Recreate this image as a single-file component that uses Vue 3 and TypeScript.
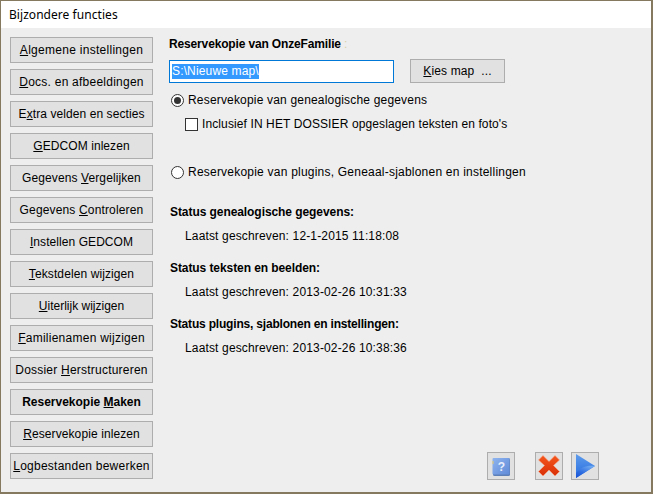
<script setup lang="ts">
interface NavItem { pre: string; key: string; post: string; ls: number; active?: boolean }
const items: NavItem[] = [
  { pre: '', key: 'A', post: 'lgemene instellingen', ls: 0.28 },
  { pre: '', key: 'D', post: 'ocs. en afbeeldingen', ls: 0.24 },
  { pre: 'E', key: 'x', post: 'tra velden en secties', ls: 0.08 },
  { pre: '', key: 'G', post: 'EDCOM inlezen', ls: 0.07 },
  { pre: 'Gegevens ', key: 'V', post: 'ergelijken', ls: 0.1 },
  { pre: 'Gegevens ', key: 'C', post: 'ontroleren', ls: 0.15 },
  { pre: '', key: 'I', post: 'nstellen GEDCOM', ls: 0.07 },
  { pre: '', key: 'T', post: 'ekstdelen wijzigen', ls: 0.1 },
  { pre: '', key: 'U', post: 'iterlijk wijzigen', ls: 0 },
  { pre: '', key: 'F', post: 'amilienamen wijzigen', ls: 0.25 },
  { pre: 'Dossier ', key: 'H', post: 'erstructureren', ls: 0.22 },
  { pre: 'Reservekopie ', key: 'M', post: 'aken', ls: 0, active: true },
  { pre: '', key: 'R', post: 'eservekopie inlezen', ls: 0.1 },
  { pre: '', key: 'L', post: 'ogbestanden bewerken', ls: 0.24 },
]
const statuses = [
  { title: 'Status genealogische gegevens:', ls: -0.07, value: 'Laatst geschreven: 12-1-2015 11:18:08' },
  { title: 'Status teksten en beelden:', ls: -0.08, value: 'Laatst geschreven: 2013-02-26 10:31:33' },
  { title: 'Status plugins, sjablonen en instellingen:', ls: -0.19, value: 'Laatst geschreven: 2013-02-26 10:38:36' },
]
const kiesRest = 'ies map  ...'
</script>

<template>
  <div class="window">
    <div class="titlebar">Bijzondere functies</div>
    <div class="content">
      <nav class="nav">
        <button v-for="it in items" :key="it.key + it.post" class="btn navbtn" :class="{ active: it.active }" :style="{ letterSpacing: it.ls + 'px' }">{{ it.pre }}<u>{{ it.key }}</u>{{ it.post }}</button>
      </nav>
      <main class="main">
        <div class="heading">Reservekopie van OnzeFamilie<span class="faint"> :</span></div>
        <div class="pathrow">
          <div class="input"><span class="sel">S:\Nieuwe map\</span></div>
          <button class="btn kies"><u>K</u>{{ kiesRest }}</button>
        </div>
        <div class="option first"><span class="radio on"></span>Reservekopie van genealogische gegevens</div>
        <div class="check"><span class="box"></span>Inclusief IN HET DOSSIER opgeslagen teksten en foto's</div>
        <div class="option second"><span class="radio"></span>Reservekopie van plugins, Geneaal-sjablonen en instellingen</div>
        <section v-for="s in statuses" :key="s.title" class="status">
          <div class="stitle" :style="{ letterSpacing: s.ls + 'px' }">{{ s.title }}</div>
          <div class="svalue">{{ s.value }}</div>
        </section>
        <div class="actions">
          <button class="btn icon help">
            <svg width="26" height="26" viewBox="0 0 26 26">
              <defs>
                <linearGradient id="bk" x1="0" y1="0" x2="1" y2="1"><stop offset="0" stop-color="#8fb4ee"/><stop offset="1" stop-color="#5f8ad8"/></linearGradient>
              </defs>
              <rect x="5" y="5" width="17" height="18" rx="1.5" fill="#5c7fb8"/>
              <rect x="4.500" y="5" width="17" height="16.500" rx="1" fill="url(#bk)"/>
              <rect x="4.500" y="8" width="1" height="3" fill="#e8c96a"/>
              <text x="13.500" y="18" class="q">?</text>
            </svg>
          </button>
          <button class="btn icon cancel">
            <svg width="26" height="26" viewBox="0 0 26 26">
              <defs>
                <linearGradient id="rd" x1="0" y1="0" x2="0" y2="1"><stop offset="0" stop-color="#f4561c"/><stop offset="1" stop-color="#d92f08"/></linearGradient>
              </defs>
              <path d="M7 2.500 13 8.500 19 2.500 23.500 7 17.500 12.500 23.500 18.500 19 23 13 17 7 23 2.500 18.500 8.500 12.500 2.500 7Z" fill="url(#rd)" stroke="#f7a98c" stroke-width=".6"/>
            </svg>
          </button>
          <button class="btn icon play">
            <svg width="26" height="26" viewBox="0 0 26 26">
              <defs>
                <linearGradient id="bl" x1="0" y1="0" x2="0" y2="1"><stop offset="0" stop-color="#5f9cec"/><stop offset=".6" stop-color="#3c7fe4"/><stop offset="1" stop-color="#2a6be0"/></linearGradient>
                <linearGradient id="bl2" x1="0.700" y1="0" x2="0.100" y2="1"><stop offset="0" stop-color="#6ea8f0"/><stop offset=".6" stop-color="#2c6be0"/><stop offset="1" stop-color="#1a55d4"/></linearGradient>
              </defs>
              <path d="M4 1 23 13 4 25Z" fill="url(#bl)"/>
              <path d="M4 20C9 14 15 12 23 13L4 25Z" fill="url(#bl2)"/>
            </svg>
          </button>
        </div>
      </main>
    </div>
  </div>
</template>

<style>
html, body { margin: 0; padding: 0; }
</style>

<style scoped>
.window {
  width: 653px;
  height: 494px;
  box-sizing: border-box;
  border: 1px solid #85795f;
  border-width: 1px 2px 2px 1px;
  background: #eeeeee;
  font: 12px "Liberation Sans", Arial, sans-serif;
  color: #000;
  display: flex;
  flex-direction: column;
  overflow: hidden;
}
.titlebar {
  height: 27px;
  background: #fff;
  padding-left: 8px;
  font: 12px/27px "Noto Sans", sans-serif;
  letter-spacing: 0.05px;
}
.content { flex: 1; display: flex; padding: 9px 0 0 9px; }
.nav { width: 143px; display: flex; flex-direction: column; gap: 6px; flex: none; }
.btn {
  box-sizing: border-box;
  border: 1px solid #adadad;
  background: #e1e1e1;
  font: inherit;
  color: #000;
  padding: 0;
  margin: 0;
  white-space: pre;
}
.navbtn { height: 26px; width: 143px; text-align: center; }
.navbtn.active { font-weight: bold; }
.main { flex: 1; position: relative; padding-left: 16px; }
.heading { font-weight: bold; line-height: 14px; letter-spacing: -0.15px; }
.faint { color: #d8d0ac; font-weight: normal; }
.pathrow { display: flex; margin-top: 8px; height: 23px; }
.input {
  box-sizing: border-box;
  width: 225px;
  height: 23px;
  margin-top: 1px;
  border: 1px solid #0078d7;
  background: #fff;
  padding: 3px 0 0 2px;
  line-height: 15px;
  letter-spacing: 0.15px;
}
.sel { background: #3399ff; color: #fff; display: inline-block; }
.kies { width: 95px; height: 24px; margin-left: 16px; letter-spacing: 0.12px; }
.option { display: flex; align-items: center; line-height: 14px; }
.option.first { margin-top: 11px; letter-spacing: 0.18px; }
.option.second { margin-top: 34px; letter-spacing: 0.22px; }
.radio {
  box-sizing: border-box;
  width: 13px;
  height: 13px;
  border: 1px solid #333;
  border-radius: 50%;
  background: #fff;
  margin: 0 4px 0 2px;
  position: relative;
  flex: none;
}
.radio.on::after {
  content: "";
  position: absolute;
  left: 2px;
  top: 2px;
  width: 7px;
  height: 7px;
  border-radius: 50%;
  background: #333;
}
.check { display: flex; align-items: center; line-height: 14px; margin: 10px 0 0 16px; letter-spacing: 0.11px; }
.box {
  box-sizing: border-box;
  width: 13px;
  height: 13px;
  border: 1px solid #333;
  background: #fff;
  margin-right: 4px;
  flex: none;
}
.status { margin-left: 1px; }
.second + .status { margin-top: 26px; }
.status + .status { margin-top: 18px; }
.stitle { font-weight: bold; line-height: 14px; }
.svalue { margin: 10px 0 0 15px; line-height: 14px; letter-spacing: 0.15px; }
.actions { position: absolute; left: 334px; top: 415px; display: flex; }
.icon { width: 28px; height: 28px; display: flex; align-items: center; justify-content: center; }
.cancel { margin-left: 20px; }
.play { margin-left: 8px; }
.q { font: bold 12px "Liberation Sans", sans-serif; fill: #e8eefc; text-anchor: middle; }
</style>
